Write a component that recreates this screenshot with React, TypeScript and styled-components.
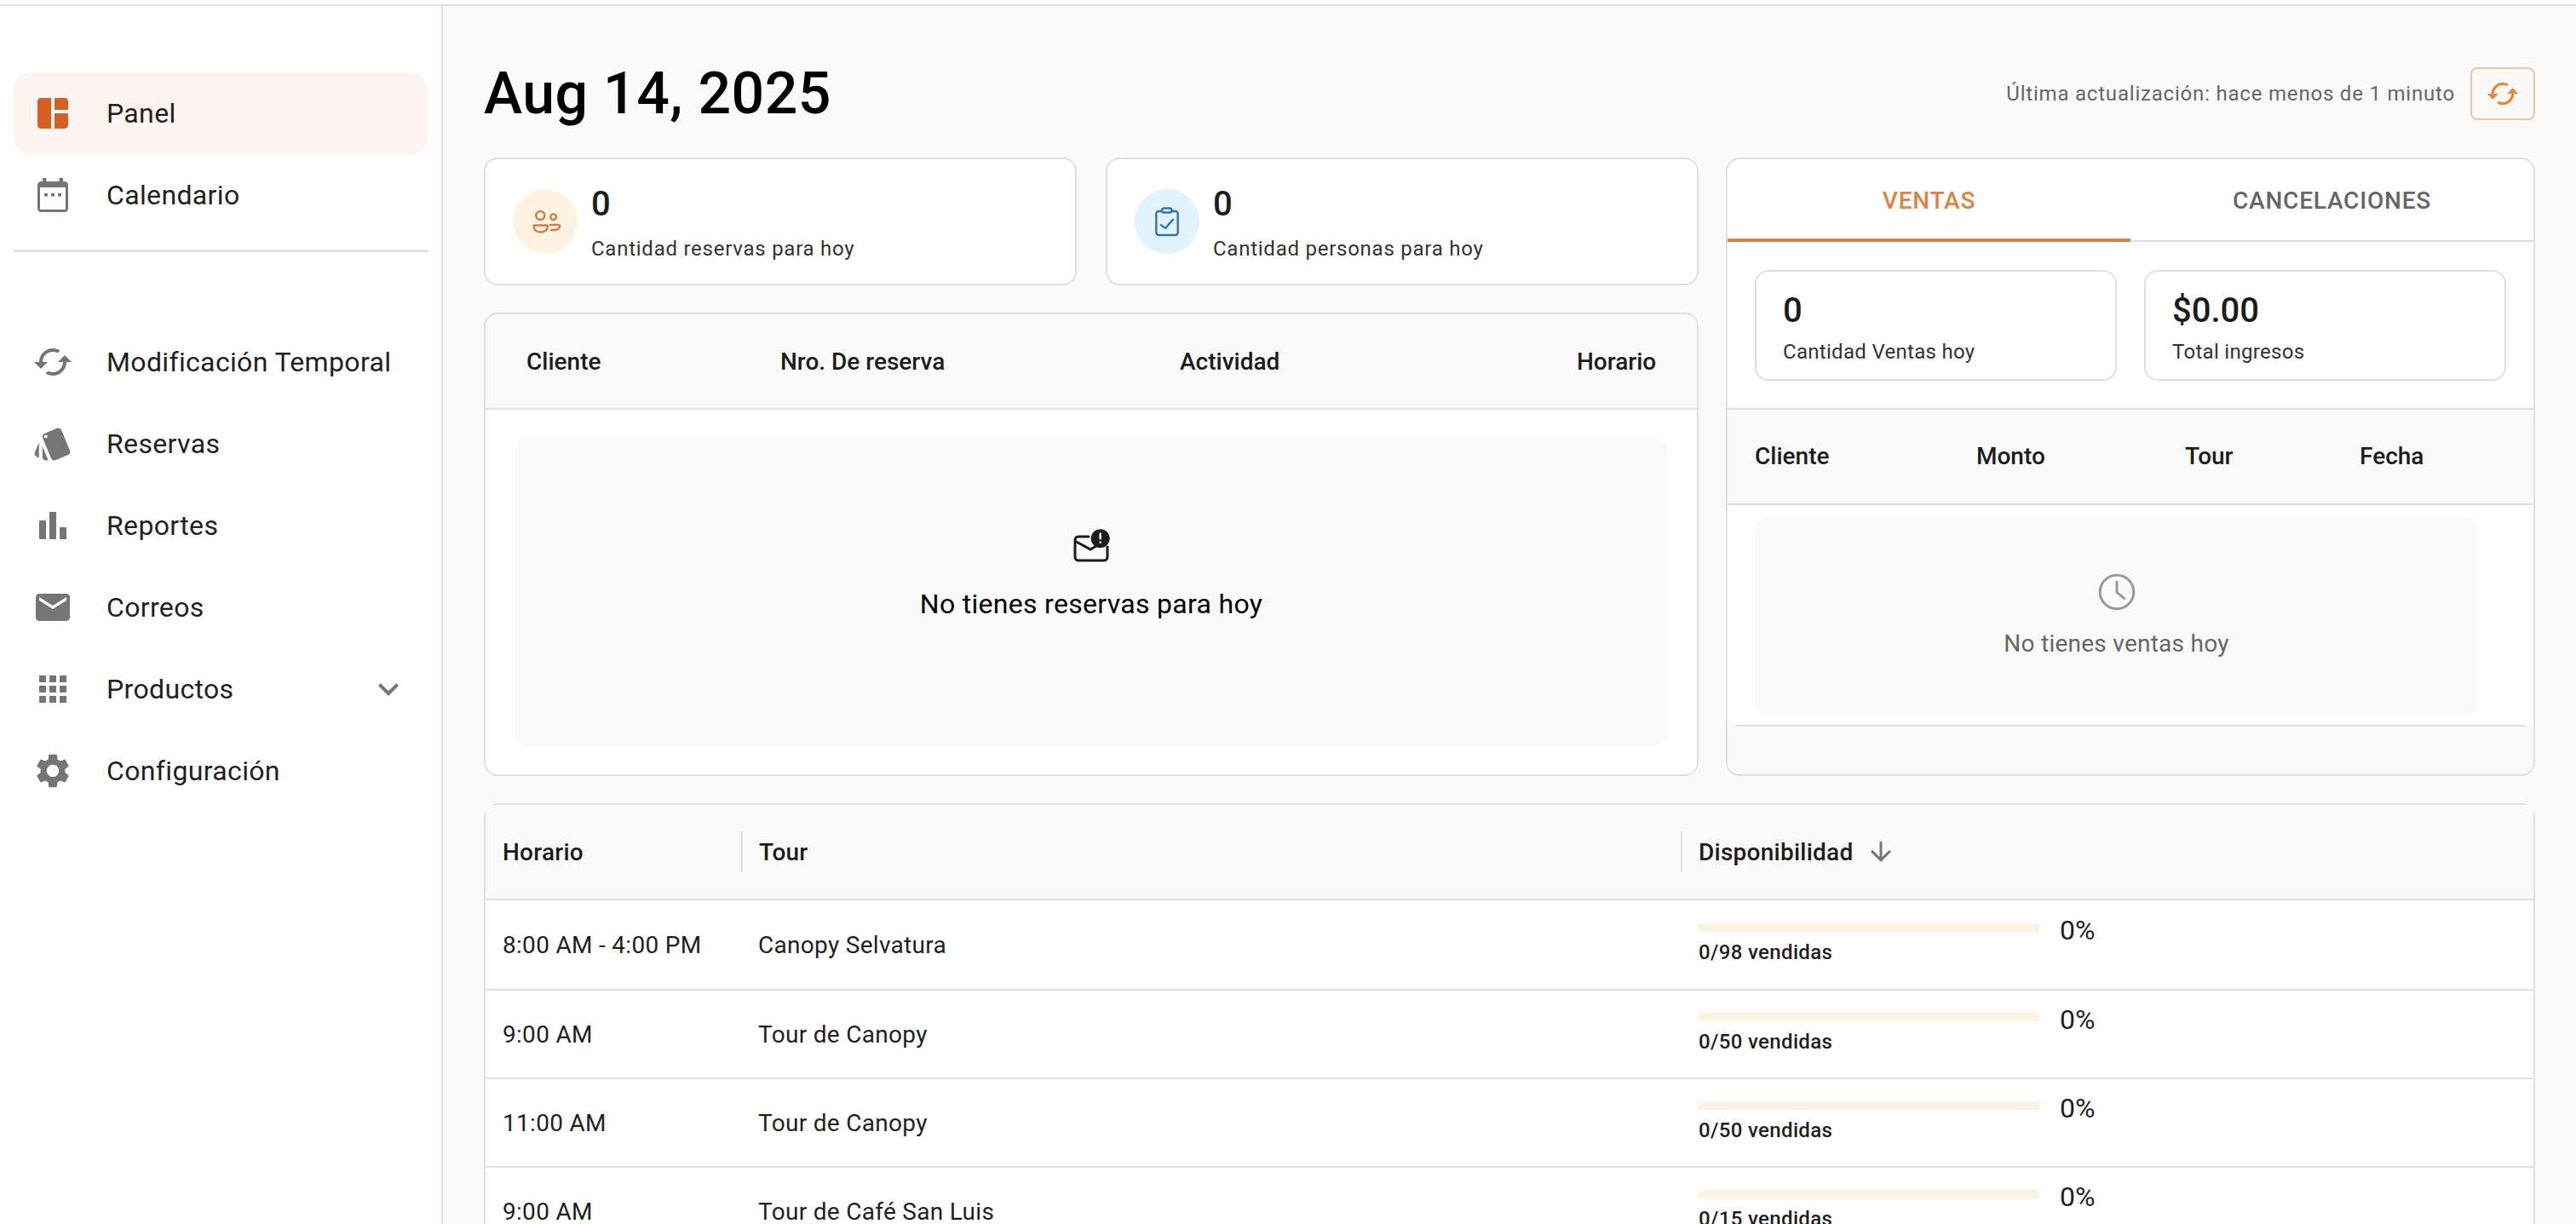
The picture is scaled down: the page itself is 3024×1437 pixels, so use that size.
import React from 'react';
import styled, { createGlobalStyle } from 'styled-components';

const ICONS: Record<string, string> = {
	panel: 'M11 21H5c-1.1 0-2-.9-2-2V5c0-1.1.9-2 2-2h6v18zm2 0h6c1.1 0 2-.9 2-2v-7h-8v9zm8-11V5c0-1.1-.9-2-2-2h-6v7h8z',
	calendar:
		'M6 2h2.2v2h7.6V2H18v2h1c1.1 0 2 .9 2 2v14c0 1.1-.9 2-2 2H5c-1.1 0-2-.9-2-2V6c0-1.1.9-2 2-2h1V2zM4.5 7.5v13h15v-13h-15zM7 11h2v1.8H7V11zm4 0h2v1.8h-2V11zm4 0h2v1.8h-2V11z',
	cached:
		'm19 8-4 4h3c0 3.31-2.69 6-6 6-1.01 0-1.97-.25-2.8-.7l-1.46 1.46C8.97 19.54 10.43 20 12 20c4.42 0 8-3.58 8-8h3l-4-4zM6 12c0-3.31 2.69-6 6-6 1.01 0 1.97.25 2.8.7l1.46-1.46C15.03 4.46 13.57 4 12 4c-4.42 0-8 3.58-8 8H1l4 4 4-4H6z',
	style:
		'm2.53 19.65 1.34.56v-9.03l-2.43 5.86c-.41 1.02.08 2.19 1.09 2.61zm19.5-3.7L17.07 3.98c-.31-.75-1.04-1.21-1.81-1.23-.26 0-.53.04-.79.15L7.1 5.95c-.75.31-1.21 1.03-1.23 1.8-.01.27.04.54.15.8l4.96 11.97c.31.76 1.05 1.22 1.83 1.23.26 0 .52-.05.77-.15l7.36-3.05c1.02-.42 1.51-1.59 1.09-2.6zM7.88 8.75c-.55 0-1-.45-1-1s.45-1 1-1 1 .45 1 1-.45 1-1 1zm-2 11c0 1.1.9 2 2 2h1.45l-3.45-8.34v6.34z',
	bars: 'M4 9h4v11H4zm12 4h4v7h-4zm-6-9h4v16h-4z',
	mail: 'M20 4H4c-1.1 0-1.99.9-1.99 2L2 18c0 1.1.9 2 2 2h16c1.1 0 2-.9 2-2V6c0-1.1-.9-2-2-2zm0 4-8 5-8-5V6l8 5 8-5v2z',
	apps: 'M4 8h4V4H4v4zm6 12h4v-4h-4v4zm-6 0h4v-4H4v4zm0-6h4v-4H4v4zm6 0h4v-4h-4v4zm6-10v4h4V4h-4zm-6 4h4V4h-4v4zm6 6h4v-4h-4v4zm0 6h4v-4h-4v4z',
	settings:
		'M19.14 12.94c.04-.3.06-.61.06-.94 0-.32-.02-.64-.07-.94l2.03-1.58c.18-.14.23-.41.12-.61l-1.92-3.32c-.12-.22-.37-.29-.59-.22l-2.39.96c-.5-.38-1.03-.7-1.62-.94l-.36-2.54c-.04-.24-.24-.41-.48-.41h-3.84c-.24 0-.43.17-.47.41l-.36 2.54c-.59.24-1.13.57-1.62.94l-2.39-.96c-.22-.08-.47 0-.59.22L2.74 8.87c-.12.21-.08.47.12.61l2.03 1.58c-.05.3-.09.63-.09.94s.02.64.07.94l-2.03 1.58c-.18.14-.23.41-.12.61l1.92 3.32c.12.22.37.29.59.22l2.39-.96c.5.38 1.03.7 1.62.94l.36 2.54c.05.24.24.41.48.41h3.84c.24 0 .44-.17.47-.41l.36-2.54c.59-.24 1.13-.56 1.62-.94l2.39.96c.22.08.47 0 .59-.22l1.92-3.32c.12-.22.07-.47-.12-.61l-2.01-1.58zM12 15.6c-1.98 0-3.6-1.62-3.6-3.6s1.62-3.6 3.6-3.6 3.6 1.62 3.6 3.6-1.62 3.6-3.6 3.6z',
	chevron: 'M16.59 8.59 12 13.17 7.41 8.59 6 10l6 6 6-6z',
	arrowDown: 'm20 12-1.41-1.41L13 16.17V4h-2v12.17l-5.58-5.59L4 12l8 8 8-8z',
};

const Icon = ({ name, size = 48, color = '#757575' }: { name: string; size?: number; color?: string }) => (
	<IconSvg viewBox="0 0 24 24" width={size} height={size} fill={color}>
		<path d={ICONS[name]} />
	</IconSvg>
);

const PeopleIcon = () => (
	<svg viewBox="0 0 40 40" width={40} height={40} fill="none" stroke="#cf7f45" strokeWidth={2.4}>
		<circle cx={14.3} cy={13} r={5} />
		<circle cx={29.6} cy={14.7} r={3.3} />
		<path d="M7.5 24.5H22a1 1 0 0 1 1 1C23 30 19 32.5 14.6 32.5S6.5 30 6.5 25.5a1 1 0 0 1 1-1z" />
		<path d="M26 24h9.5c1.5 0 2 1 1.6 2-1 2.5-3 4-6 4H27" strokeLinecap="round" />
	</svg>
);

const ClipboardIcon = () => (
	<svg viewBox="0 0 40 40" width={40} height={40} fill="none" stroke="#2f74b5" strokeWidth={2.4}>
		<rect x={7.3} y={8} width={25.4} height={28} rx={3} />
		<rect x={14} y={4.5} width={11.5} height={5} rx={2.5} fill="#e3f3fd" />
		<path d="M13 24.3l5 3.6 9-10" strokeLinecap="round" strokeLinejoin="round" />
	</svg>
);

const MailAlertIcon = () => (
	<svg viewBox="0 0 60 50" width={60} height={50} fill="none">
		<path
			d="M27 15H15a4 4 0 0 0-4 4v20a4 4 0 0 0 4 4h30a4 4 0 0 0 4-4V27"
			stroke="#1c1c1c"
			strokeWidth={3}
			strokeLinecap="round"
		/>
		<path d="M11.5 20.5L29 30l7-4" stroke="#1c1c1c" strokeWidth={3} strokeLinecap="round" />
		<circle cx={40.7} cy={17.3} r={11} fill="#1c1c1c" />
		<rect x={39.5} y={10.5} width={2.4} height={8} rx={1} fill="#fff" />
		<rect x={39.5} y={20.5} width={2.4} height={2.6} rx={1} fill="#fff" />
	</svg>
);

const ClockIcon = () => (
	<svg viewBox="0 0 24 24" width={48} height={48} fill="none" stroke="#999" strokeWidth={1.5}>
		<circle cx={12} cy={12} r={9.9} />
		<path d="M12 6v6.2l4.4 3.6" strokeLinecap="round" />
	</svg>
);

const NAV_TOP = [
	{ icon: 'panel', label: 'Panel', active: true },
	{ icon: 'calendar', label: 'Calendario' },
];

const NAV_BOTTOM = [
	{ icon: 'cached', label: 'Modificación Temporal' },
	{ icon: 'style', label: 'Reservas' },
	{ icon: 'bars', label: 'Reportes' },
	{ icon: 'mail', label: 'Correos' },
	{ icon: 'apps', label: 'Productos', expandable: true },
	{ icon: 'settings', label: 'Configuración' },
];

const TOURS = [
	{ time: '8:00 AM - 4:00 PM', tour: 'Canopy Selvatura', sold: '0/98 vendidas' },
	{ time: '9:00 AM', tour: 'Tour de Canopy', sold: '0/50 vendidas' },
	{ time: '11:00 AM', tour: 'Tour de Canopy', sold: '0/50 vendidas' },
	{ time: '9:00 AM', tour: 'Tour de Café San Luis', sold: '0/15 vendidas' },
];

type NavEntry = { icon: string; label: string; active?: boolean; expandable?: boolean };

const NavRow = ({ icon, label, active, expandable }: NavEntry) => (
	<NavItem $active={active}>
		<Icon name={icon} color={active ? '#d65f25' : '#757575'} />
		<NavLabel>{label}</NavLabel>
		{expandable && <Icon name="chevron" />}
	</NavItem>
);

const App = () => (
	<Page>
		<GlobalStyle />
		<TopLine />
		<Layout>
			<Sidebar>
				{NAV_TOP.map((item) => (
					<NavRow key={item.label} {...item} />
				))}
				<NavDivider />
				{NAV_BOTTOM.map((item) => (
					<NavRow key={item.label} {...item} />
				))}
			</Sidebar>

			<Main>
				<TitleRow>
					<Title>Aug 14, 2025</Title>
					<UpdatedBox>
						<UpdatedText>Última actualización: hace menos de 1 minuto</UpdatedText>
						<RefreshButton>
							<Icon name="cached" size={40} color="#e08a46" />
						</RefreshButton>
					</UpdatedBox>
				</TitleRow>

				<TopGrid>
					<LeftColumn>
						<StatRow>
							<StatCard>
								<StatCircle $bg="#fef3e2">
									<PeopleIcon />
								</StatCircle>
								<StatText>
									<StatValue>0</StatValue>
									<StatLabel>Cantidad reservas para hoy</StatLabel>
								</StatText>
							</StatCard>
							<StatCard>
								<StatCircle $bg="#e3f3fd">
									<ClipboardIcon />
								</StatCircle>
								<StatText>
									<StatValue>0</StatValue>
									<StatLabel>Cantidad personas para hoy</StatLabel>
								</StatText>
							</StatCard>
						</StatRow>

						<Panel>
							<TableHead $columns="298px 469px 466px auto" $pad={48} $height={112}>
								<HeadLabel>Cliente</HeadLabel>
								<HeadLabel>Nro. De reserva</HeadLabel>
								<HeadLabel>Actividad</HeadLabel>
								<HeadLabel>Horario</HeadLabel>
							</TableHead>
							<ReservasEmpty>
								<MailAlertIcon />
								<ReservasEmptyText>No tienes reservas para hoy</ReservasEmptyText>
							</ReservasEmpty>
						</Panel>
					</LeftColumn>

					<Panel>
						<Tabs>
							<Tab $active>VENTAS</Tab>
							<Tab>CANCELACIONES</Tab>
						</Tabs>
						<SalesStats>
							<SalesCard>
								<StatValue>0</StatValue>
								<SalesLabel>Cantidad Ventas hoy</SalesLabel>
							</SalesCard>
							<SalesCard>
								<StatValue>$0.00</StatValue>
								<SalesLabel>Total ingresos</SalesLabel>
							</SalesCard>
						</SalesStats>
						<TableHead $columns="260px 245px 205px auto" $pad={32} $height={114} $topBorder>
							<HeadLabel>Cliente</HeadLabel>
							<HeadLabel>Monto</HeadLabel>
							<HeadLabel>Tour</HeadLabel>
							<HeadLabel>Fecha</HeadLabel>
						</TableHead>
						<SalesBody>
							<SalesEmpty>
								<ClockIcon />
								<SalesEmptyText>No tienes ventas hoy</SalesEmptyText>
							</SalesEmpty>
						</SalesBody>
						<SalesRule />
						<SalesFooter />
					</Panel>
				</TopGrid>

				<ToursPanel>
					<ToursHead>
						<ToursHeadCell>Horario</ToursHeadCell>
						<ToursHeadCell $divider>Tour</ToursHeadCell>
						<ToursHeadCell $divider>
							Disponibilidad
							<Icon name="arrowDown" size={36} />
						</ToursHeadCell>
					</ToursHead>
					{TOURS.map((row) => (
						<TourRow key={row.time + row.tour}>
							<TourCell>{row.time}</TourCell>
							<TourCell>{row.tour}</TourCell>
							<Availability>
								<div>
									<ProgressTrack />
									<SoldLabel>{row.sold}</SoldLabel>
								</div>
								<Percent>0%</Percent>
							</Availability>
						</TourRow>
					))}
				</ToursPanel>
			</Main>
		</Layout>
	</Page>
);

const GlobalStyle = createGlobalStyle`
	html, body {
		margin: 0;
		padding: 0;
		height: 100%;
		background: #fff;
	}
	* {
		box-sizing: border-box;
	}
`;

const Page = styled.div`
	height: 100vh;
	overflow: hidden;
	display: flex;
	flex-direction: column;
	font-family: Roboto, 'Liberation Sans', sans-serif;
	color: #1c1c1c;
`;

const TopLine = styled.div`
	height: 7px;
	flex-shrink: 0;
	background: #fff;
	border-bottom: 2px solid #e0e0e0;
`;

const Layout = styled.div`
	flex: 1;
	display: flex;
	min-height: 0;
`;

const Sidebar = styled.nav`
	width: 520px;
	flex-shrink: 0;
	padding: 78px 16px 0;
	background: #fff;
	border-right: 2px solid #e0e0e0;
`;

const IconSvg = styled.svg`
	display: block;
	flex-shrink: 0;
`;

const NavItem = styled.div<{ $active?: boolean }>`
	height: 96px;
	display: flex;
	align-items: center;
	padding: 0 22px;
	border-radius: 20px;
	background: ${(p) => (p.$active ? '#fdf4f0' : 'transparent')};
`;

const NavLabel = styled.span`
	flex: 1;
	margin-left: 39px;
	font-size: 32px;
	line-height: 48px;
	letter-spacing: 0.35px;
	color: #1f1f1f;
`;

const NavDivider = styled.div`
	height: 3px;
	margin: 16px 0 81px;
	background: #e0e0e0;
`;

const Main = styled.main`
	flex: 1;
	min-width: 0;
	padding: 0 48px;
	background: #fafafa;
`;

const TitleRow = styled.div`
	height: 178px;
	padding-top: 28px;
	display: flex;
	align-items: center;
	justify-content: space-between;
`;

const Title = styled.h1`
	margin: 0;
	font-size: 68px;
	font-weight: 500;
	line-height: 80px;
	letter-spacing: 0.5px;
	color: #000;
`;

const UpdatedBox = styled.div`
	display: flex;
	align-items: center;
	gap: 18px;
`;

const UpdatedText = styled.span`
	font-size: 24px;
	color: #666;
	letter-spacing: 0.8px;
`;

const RefreshButton = styled.button`
	width: 76px;
	height: 62px;
	padding: 0;
	display: flex;
	align-items: center;
	justify-content: center;
	background: #fbf9f7;
	border: 2px solid #ecc6a8;
	border-radius: 8px;
`;

const TopGrid = styled.div`
	display: grid;
	grid-template-columns: 1426px 950px;
	gap: 32px;
	height: 726px;
`;

const LeftColumn = styled.div`
	display: flex;
	flex-direction: column;
	gap: 32px;
	min-height: 0;
`;

const StatRow = styled.div`
	display: grid;
	grid-template-columns: 1fr 1fr;
	gap: 34px;
`;

const StatCard = styled.div`
	height: 150px;
	display: flex;
	align-items: center;
	gap: 16px;
	padding: 0 32px;
	background: #fff;
	border: 2px solid #e0e0e0;
	border-radius: 16px;
`;

const StatCircle = styled.div<{ $bg: string }>`
	width: 76px;
	height: 76px;
	flex-shrink: 0;
	display: flex;
	align-items: center;
	justify-content: center;
	border-radius: 50%;
	background: ${(p) => p.$bg};
`;

const StatText = styled.div`
	display: flex;
	flex-direction: column;
	gap: 6px;
	padding-top: 2px;
`;

const StatValue = styled.div`
	font-size: 40px;
	font-weight: 500;
	line-height: 56px;
	color: #1c1c1c;
`;

const StatLabel = styled.div`
	font-size: 24px;
	line-height: 36px;
	color: #333;
	letter-spacing: 0.75px;
`;

const Panel = styled.section`
	flex: 1;
	min-height: 0;
	display: flex;
	flex-direction: column;
	overflow: hidden;
	background: #fff;
	border: 2px solid #e0e0e0;
	border-radius: 16px;
`;

const TableHead = styled.div<{ $columns: string; $pad: number; $height: number; $topBorder?: boolean }>`
	height: ${(p) => p.$height}px;
	flex-shrink: 0;
	display: grid;
	grid-template-columns: ${(p) => p.$columns};
	align-items: center;
	padding-left: ${(p) => p.$pad}px;
	padding-bottom: ${(p) => (p.$topBorder ? '2px' : '0')};
	background: #fafafa;
	border-bottom: 2px solid #e0e0e0;
	border-top: ${(p) => (p.$topBorder ? '2px solid #e0e0e0' : 'none')};
`;

const HeadLabel = styled.span`
	font-size: 28px;
	font-weight: 500;
	color: #1c1c1c;
`;

const ReservasEmpty = styled.div`
	height: 362px;
	margin: 33px 34px 0;
	padding-top: 101px;
	display: flex;
	flex-direction: column;
	align-items: center;
	gap: 22px;
	background: #fafafa;
	border-radius: 16px;
`;

const ReservasEmptyText = styled.div`
	font-size: 32px;
	line-height: 44px;
	letter-spacing: 0.3px;
	color: #000;
`;

const Tabs = styled.div`
	height: 97px;
	flex-shrink: 0;
	display: grid;
	grid-template-columns: 1fr 1fr;
	border-bottom: 2px solid #e0e0e0;
`;

const Tab = styled.div<{ $active?: boolean }>`
	height: 97px;
	display: flex;
	align-items: center;
	justify-content: center;
	padding-top: ${(p) => (p.$active ? '4px' : '0')};
	font-size: 28px;
	font-weight: 500;
	letter-spacing: 0.8px;
	color: ${(p) => (p.$active ? '#d9854a' : '#666')};
	border-bottom: ${(p) => (p.$active ? '4px solid #d0854e' : 'none')};
`;

const SalesStats = styled.div`
	display: grid;
	grid-template-columns: 1fr 1fr;
	gap: 32px;
	padding: 33px 32px 32px;
`;

const SalesCard = styled.div`
	height: 130px;
	padding: 18px 31px 0;
	border: 2px solid #e0e0e0;
	border-radius: 16px;
`;

const SalesLabel = styled.div`
	font-size: 24px;
	line-height: 34px;
	margin-top: 3px;
	color: #333;
	letter-spacing: 0.3px;
`;

const SalesBody = styled.div`
	flex-shrink: 0;
	padding: 13px 0 11px 32px;
`;

const SalesEmpty = styled.div`
	width: 849px;
	height: 234px;
	padding-top: 65px;
	display: flex;
	flex-direction: column;
	align-items: center;
	gap: 17px;
	background: #fafafa;
	border-radius: 16px;
`;

const SalesEmptyText = styled.div`
	font-size: 28px;
	line-height: 40px;
	letter-spacing: 0.25px;
	color: #666;
`;

const SalesRule = styled.div`
	height: 2px;
	flex-shrink: 0;
	margin: 0 9px;
	background: #e0e0e0;
`;

const SalesFooter = styled.div`
	flex: 1;
	background: #fafafa;
`;

const ToursPanel = styled.section`
	margin-top: 32px;
	background: #fff;
	border: 2px solid #e0e0e0;
	border-radius: 16px 16px 0 0;
`;

const ToursHead = styled.div`
	height: 112px;
	display: grid;
	grid-template-columns: 300px 1103px 1fr;
	align-items: center;
	background: #fafafa;
	border-bottom: 2px solid #e0e0e0;
`;

const ToursHeadCell = styled.div<{ $divider?: boolean }>`
	height: 48px;
	display: flex;
	align-items: center;
	gap: 15px;
	padding-left: ${(p) => (p.$divider ? '19px' : '20px')};
	border-left: ${(p) => (p.$divider ? '2px solid #e0e0e0' : 'none')};
	font-size: 28px;
	font-weight: 500;
	letter-spacing: 0.25px;
	color: #1c1c1c;
`;

const TourRow = styled.div`
	height: 104px;
	display: grid;
	grid-template-columns: 300px 1103px 1fr;
	align-items: center;
	border-bottom: 2px solid #e0e0e0;

	&:nth-child(2) {
		height: 106px;
	}
`;

const TourCell = styled.div`
	padding-left: 20px;
	font-size: 28px;
	letter-spacing: 0.3px;
	color: #1f1f1f;
`;

const Availability = styled.div`
	display: flex;
	align-items: flex-start;
	gap: 24px;
	padding-left: 21px;
`;

const ProgressTrack = styled.div`
	width: 400px;
	height: 10px;
	background: #fcf4e3;
`;

const SoldLabel = styled.div`
	margin-top: 8px;
	font-size: 24px;
	line-height: 32px;
	font-weight: 500;
	letter-spacing: 0.35px;
	color: #1f1f1f;
`;

const Percent = styled.div`
	margin-top: -12px;
	font-size: 32px;
	line-height: 40px;
	color: #1f1f1f;
`;

export default App;
